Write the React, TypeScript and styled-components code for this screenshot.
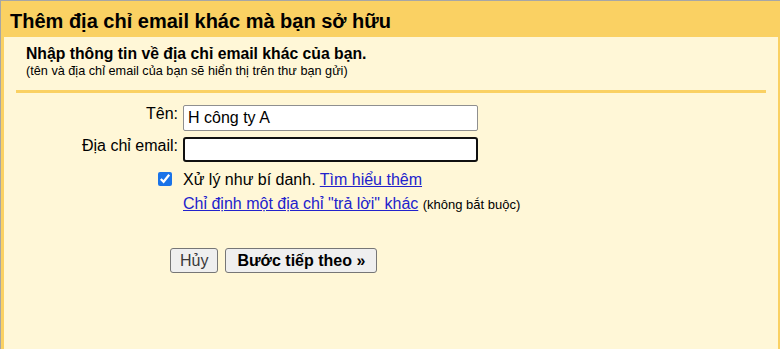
import React, { useState } from "react"
import styled, { createGlobalStyle } from "styled-components"

const GlobalStyle = createGlobalStyle`
  html, body {
    margin: 0;
    padding: 0;
    height: 100%;
    background: #a6a6a6;
  }
  #root {
    height: 100%;
  }
  * {
    box-sizing: border-box;
  }
`

const Panel = styled.div`
  height: calc(100% - 1px);
  margin: 1px 0 0 1px;
  border-left: 3px solid #fad163;
  border-right: 2px solid #fad163;
  background: #fff7d7;
  font-family: "Liberation Sans", Arial, sans-serif;
  color: #000;
`

const Header = styled.h1`
  margin: 0;
  height: 36px;
  padding: 8px 0 0 6px;
  background: #fad163;
  font-size: 20px;
  line-height: 24px;
  font-weight: bold;
`

const Body = styled.div`
  padding: 8px 12px 0 12px;
`

const Intro = styled.div`
  padding-left: 10px;
`

const Lead = styled.div`
  font-size: 15.75px;
  line-height: 18px;
  font-weight: bold;
`

const Note = styled.div<{ $inline?: boolean }>`
  display: ${(p) => (p.$inline ? "inline" : "block")};
  margin-top: ${(p) => (p.$inline ? "0" : "1px")};
  font-size: ${(p) => (p.$inline ? "13px" : "12.7px")};
  line-height: 15px;
`

const Rule = styled.div`
  height: 3px;
  margin-top: 11px;
  background: #fad163;
`

const Form = styled.div`
  display: grid;
  grid-template-columns: 162px 295px;
  column-gap: 5px;
  row-gap: 6px;
  margin-top: 12px;
  align-items: start;
`

const Label = styled.label`
  text-align: right;
  font-size: 16px;
  line-height: 18px;
  white-space: nowrap;
`

const TextInput = styled.input<{ $focused?: boolean }>`
  width: 295px;
  height: ${(p) => (p.$focused ? "25px" : "26px")};
  margin: 0;
  padding: 0 4px;
  font-family: "Liberation Sans", Arial, sans-serif;
  font-size: 16px;
  color: #000;
  background: #fff;
  border: ${(p) => (p.$focused ? "2px solid #101010" : "1px solid #8f8f8f")};
  border-radius: ${(p) => (p.$focused ? "3px" : "2px")};
  outline: none;
`

const CheckCell = styled.div`
  display: flex;
  justify-content: flex-end;
  padding-top: 4px;
`

const Check = styled.input`
  width: 14px;
  height: 14px;
  margin: 0 6px 0 0;
  accent-color: #1a73e8;
`

const Line = styled.div<{ $tight?: boolean }>`
  font-size: 16px;
  line-height: 18px;
  padding-top: ${(p) => (p.$tight ? "0" : "3px")};
  white-space: nowrap;
`

const Link = styled.a`
  color: #2222cc;
  text-decoration: underline;
  cursor: pointer;
`

const Actions = styled.div`
  display: flex;
  gap: 7px;
  margin: 35px 0 0 154px;
`

const Button = styled.button<{ $primary?: boolean }>`
  height: 25px;
  padding: ${(p) => (p.$primary ? "0 11px" : "0 9px")};
  font-family: "Liberation Sans", Arial, sans-serif;
  font-size: 16px;
  font-weight: ${(p) => (p.$primary ? "bold" : "normal")};
  color: ${(p) => (p.$primary ? "#000" : "#3a3a3a")};
  background: #efefef;
  border: 1px solid #767676;
  border-radius: 3px;
  cursor: pointer;
`

export default function App() {
  const [name, setName] = useState("H công ty A")
  const [email, setEmail] = useState("")
  const [alias, setAlias] = useState(true)

  return (
    <>
      <GlobalStyle />
      <Panel>
        <Header>Thêm địa chỉ email khác mà bạn sở hữu</Header>
        <Body>
          <Intro>
            <Lead>Nhập thông tin về địa chỉ email khác của bạn.</Lead>
            <Note>(tên và địa chỉ email của bạn sẽ hiển thị trên thư bạn gửi)</Note>
          </Intro>
          <Rule />
          <Form>
            <Label htmlFor="name">Tên:</Label>
            <TextInput id="name" value={name} onChange={(e) => setName(e.target.value)} />
            <Label htmlFor="email">Địa chỉ email:</Label>
            <TextInput id="email" $focused value={email} onChange={(e) => setEmail(e.target.value)} autoFocus />
            <CheckCell>
              <Check type="checkbox" checked={alias} onChange={(e) => setAlias(e.target.checked)} />
            </CheckCell>
            <Line>
              Xử lý như bí danh. <Link>Tìm hiểu thêm</Link>
            </Line>
            <div />
            <Line $tight>
              <Link>Chỉ định một địa chỉ "trả lời" khác</Link> <Note $inline>(không bắt buộc)</Note>
            </Line>
          </Form>
          <Actions>
            <Button>Hủy</Button>
            <Button $primary>Bước tiếp theo »</Button>
          </Actions>
        </Body>
      </Panel>
    </>
  )
}
